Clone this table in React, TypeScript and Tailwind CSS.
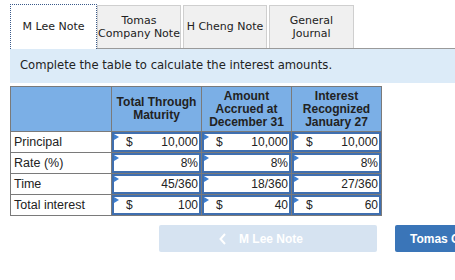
import React from "react";

const rows = [
  { label: "Principal", cells: [["$", "10,000"], ["$", "10,000"], ["$", "10,000"]] },
  { label: "Rate (%)", cells: [["", "8%"], ["", "8%"], ["", "8%"]] },
  { label: "Time", cells: [["", "45/360"], ["", "18/360"], ["", "27/360"]] },
  { label: "Total interest", cells: [["$", "100"], ["$", "40"], ["$", "60"]] },
];

function InputCell({ sign, value }: { sign: string; value: string }) {
  return (
    <td className="p-0 border border-[#7a7a7a] h-[20px]">
      <div className="relative h-[20px] bg-white border-2 border-[#3f6fb0] flex items-center justify-between pl-[12px] pr-[1px]">
        <span className="absolute left-0 top-0 w-0 h-0 border-t-[3px] border-b-[3px] border-l-[5px] border-t-transparent border-b-transparent border-l-[#3d7fd0]" />
        <span>{sign}</span>
        <span>{value}</span>
      </div>
    </td>
  );
}

export default function App() {
  return (
    <div className="w-[455px] h-[280px] overflow-hidden bg-white relative" style={{ fontFamily: "'Liberation Sans', Arial, sans-serif" }}>
      <div className="pl-[10px] pt-[4px] flex items-end" style={{ fontFamily: "'DejaVu Sans', Verdana, sans-serif" }}>
        <div className="w-[87px] h-[45px] bg-white border border-dotted border-[#3a5a8a] border-b-0 flex items-center justify-center text-[11px] text-[#222]">
          M Lee Note
        </div>
        <div className="flex-1 flex items-end border-b border-[#9a9a9a] h-[45px] gap-[2px]">
          <div className="w-[84px] h-[43px] bg-[#f0f0f0] border border-[#cfcfcf] border-b-0 flex items-center justify-center text-center text-[11px] leading-[13px] text-[#222]">
            Tomas<br />Company Note
          </div>
          <div className="w-[84px] h-[43px] bg-[#f0f0f0] border border-[#cfcfcf] border-b-0 flex items-center justify-center text-[11px] text-[#222]">
            H Cheng Note
          </div>
          <div className="w-[85px] h-[43px] bg-[#f0f0f0] border border-[#cfcfcf] border-b-0 flex items-center justify-center text-center text-[11px] leading-[13px] text-[#222]">
            General<br />Journal
          </div>
        </div>
      </div>
      <div className="ml-[10px] h-[34px] bg-[#dcebf8] flex items-center pl-[10px] text-[11.6px] text-[#222]" style={{ fontFamily: "'DejaVu Sans', Verdana, sans-serif" }}>
        Complete the table to calculate the interest amounts.
      </div>
      <table className="ml-[10px] mt-[3px] border-collapse text-[12px] text-[#222]">
        <thead>
          <tr className="bg-[#7bafe6] h-[45px]">
            <th className="w-[101px] border border-[#7a7a7a]"></th>
            <th className="w-[90px] border border-[#7a7a7a] font-bold leading-[13px] text-[#222]">Total Through<br />Maturity</th>
            <th className="w-[90px] border border-[#7a7a7a] font-bold leading-[13px] text-[#222]">Amount<br />Accrued at<br />December 31</th>
            <th className="w-[90px] border border-[#7a7a7a] font-bold leading-[13px] text-[#222]">Interest<br />Recognized<br />January 27</th>
          </tr>
        </thead>
        <tbody>
          {rows.map((r) => (
            <tr key={r.label}>
              <td className="border border-[#7a7a7a] px-[3px] h-[20px] text-[12.5px]">{r.label}</td>
              {r.cells.map((c, i) => (
                <InputCell key={i} sign={c[0]} value={c[1]} />
              ))}
            </tr>
          ))}
        </tbody>
      </table>
      <div className="flex mt-[9px] pl-[159px] gap-[18px]">
        <div className="w-[218px] h-[27px] shrink-0 rounded-[2px] bg-[#d6e3f1] text-white font-bold text-[12px] flex items-center justify-center gap-[12px] pr-[14px]">
          <svg width="8" height="12" viewBox="0 0 8 12"><path d="M6 1L1.5 6L6 11" stroke="white" strokeWidth="2" fill="none" /></svg>
          <span>M Lee Note</span>
        </div>
        <div className="w-[100px] h-[27px] shrink-0 rounded-[2px] bg-[#3a75b8] text-white font-bold text-[12px] flex items-center pl-[15px] whitespace-nowrap">
          Tomas Company Note
        </div>
      </div>
    </div>
  );
}
